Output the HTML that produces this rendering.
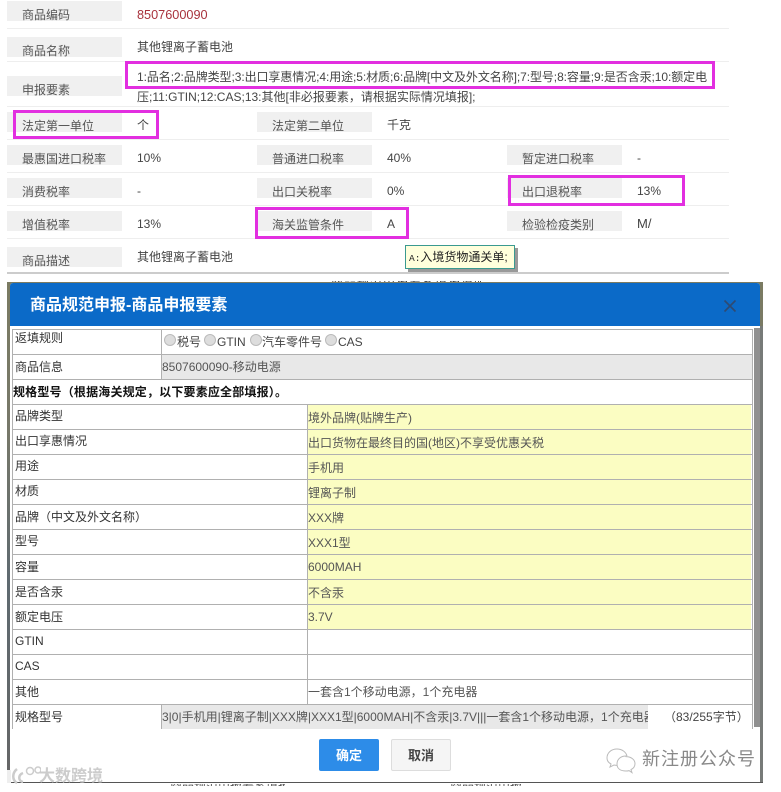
<!DOCTYPE html>
<html lang="zh"><head><meta charset="utf-8"><title>商品规范申报</title>
<style>
*{box-sizing:border-box}
html,body{margin:0;padding:0;background:#fff}
body{width:781px;height:792px;position:relative;overflow:hidden;font:12px/16px "Liberation Sans","Noto Sans CJK SC",sans-serif;color:#444}
#w{left:0;top:0;width:781px;height:792px;overflow:hidden;filter:blur(.35px)}
div{position:absolute}
.l{width:115px;height:20px;background:#f0f0f0;padding:5px 0 0 15px;line-height:18px;white-space:nowrap;overflow:visible;color:#555}
.v{white-space:nowrap;color:#444;line-height:16px}
.h{left:7px;width:722px;height:1px;background:#eee}
.m{border:3px solid #e22fe0}
.t{white-space:nowrap;color:#333;line-height:16px}
.y{white-space:nowrap;color:#555;line-height:16px}
.hl{left:12px;width:740px;height:1px;background:#b0b0b0}
.vl{width:1px;background:#b0b0b0}
.r{position:absolute;width:12px;height:12px;border-radius:50%;background:#ddd;border:1px solid #bbb;top:334px}
</style></head><body><div id="w">

<div class="l" style="left:7px;top:1px">商品编码</div><div class="v" style="left:137px;top:7px;color:#a8323c;font-size:12.7px">8507600090</div>
<div class="h" style="top:28px"></div>
<div class="l" style="left:7px;top:37px">商品名称</div><div class="v" style="left:137px;top:39px">其他锂离子蓄电池</div>
<div class="h" style="top:61px"></div>
<div class="l" style="left:7px;top:76px">申报要素</div>
<div class="v" style="left:137px;top:69px;letter-spacing:-.08px">1:品名;2:品牌类型;3:出口享惠情况;4:用途;5:材质;6:品牌[中文及外文名称];7:型号;8:容量;9:是否含汞;10:额定电</div>
<div class="v" style="left:137px;top:89px">压;11:GTIN;12:CAS;13:其他[非必报要素，请根据实际情况填报];</div>
<div class="h" style="top:106px"></div>

<div class="l" style="left:7px;top:112px">法定第一单位</div><div class="v" style="left:137px;top:117px">个</div>
<div class="l" style="left:257px;top:112px">法定第二单位</div><div class="v" style="left:387px;top:117px">千克</div>
<div class="h" style="top:139px"></div>

<div class="l" style="left:7px;top:145px">最惠国进口税率</div><div class="v" style="left:137px;top:150px">10%</div>
<div class="l" style="left:257px;top:145px">普通进口税率</div><div class="v" style="left:387px;top:150px">40%</div>
<div class="l" style="left:507px;top:145px">暂定进口税率</div><div class="v" style="left:637px;top:150px">-</div>
<div class="h" style="top:172px"></div>

<div class="l" style="left:7px;top:178px">消费税率</div><div class="v" style="left:137px;top:183px">-</div>
<div class="l" style="left:257px;top:178px">出口关税率</div><div class="v" style="left:387px;top:183px">0%</div>
<div class="l" style="left:507px;top:178px">出口退税率</div><div class="v" style="left:637px;top:183px">13%</div>
<div class="h" style="top:205px"></div>

<div class="l" style="left:7px;top:211px">增值税率</div><div class="v" style="left:137px;top:216px">13%</div>
<div class="l" style="left:257px;top:211px">海关监管条件</div><div class="v" style="left:387px;top:216px">A</div>
<div class="l" style="left:507px;top:211px">检验检疫类别</div><div class="v" style="left:637px;top:216px;font-size:13px">M/</div>
<div class="h" style="top:238px"></div>

<div class="l" style="left:7px;top:247px">商品描述</div><div class="v" style="left:137px;top:249px">其他锂离子蓄电池</div>
<div class="h" style="top:272px;height:2px;background:#ccc"></div>

<div class="m" style="left:125px;top:61px;width:590px;height:28px"></div>
<div class="m" style="left:13px;top:110px;width:146px;height:29px"></div>
<div class="m" style="left:255px;top:207px;width:154px;height:32px"></div>
<div class="m" style="left:508px;top:175px;width:177px;height:31px"></div>

<div style="left:408px;top:248px;width:110px;height:24px;background:#999"></div>
<div style="left:405px;top:245px;width:110px;height:24px;background:#ffffdc;border:1px solid #3a9a90;color:#222;padding:3px 0 0 3px;white-space:nowrap;line-height:16px;font-size:12px"><span style="font-family:'Liberation Mono',monospace;font-size:9.5px">A:</span>入境货物通关单;</div>

<!-- page text peeking behind the dialog -->
<div style="left:331px;top:281px;width:150px;height:2px;overflow:hidden;color:#333;white-space:nowrap;line-height:3px;letter-spacing:1px">商品规范申报要素填报说明</div>
<div style="left:170px;top:784px;width:115px;height:2px;overflow:hidden;color:#555;white-space:nowrap;line-height:2px">商品规范申报要素填报说明</div>
<div style="left:450px;top:784px;width:72px;height:2px;overflow:hidden;color:#555;white-space:nowrap;line-height:2px">商品规范申报</div>

<!-- overlay strips behind modal -->
<div style="left:7px;top:282px;width:756px;height:501px;background:linear-gradient(#7b7b62,#77786a 30%,#5f6a70 60%,#666 100%)"></div>
<div style="left:760px;top:326px;width:3px;height:457px;background:#777a78"></div>
<div style="left:7px;top:782px;width:756px;height:1px;background:#555"></div>

<!-- modal -->
<div style="left:10px;top:283px;width:750px;height:499px;background:#fff;border-radius:3px 3px 0 0"></div>
<div style="left:754px;top:328px;width:6px;height:399px;background:#909090"></div>
<div style="left:10px;top:283px;width:750px;height:43px;background:#0b6ac8;border-radius:3px 3px 0 0"></div>
<div style="left:30px;top:295px;color:#fff;font-size:16px;font-weight:bold;line-height:22px;white-space:nowrap">商品规范申报-商品申报要素</div>
<svg style="position:absolute;left:722px;top:298px" width="16" height="16" viewBox="0 0 16 16"><path d="M2.5 2.5L13.5 13.5M13.5 2.5L2.5 13.5" stroke="#2f4a72" stroke-width="1.6" fill="none"/></svg>

<!-- table fills -->
<div style="left:12px;top:329px;width:741px;height:400px;background:#fff"></div>
<div style="left:162px;top:355px;width:590px;height:24px;background:#e8e8e8"></div>
<div style="left:308px;top:405px;width:443px;height:224px;background:#fbfdc2"></div>
<div style="left:162px;top:705px;width:486px;height:24px;background:#e8e8e8"></div>

<!-- table lines -->
<div class="hl" style="top:329px"></div><div class="hl" style="top:354px"></div><div class="hl" style="top:379px"></div>
<div class="hl" style="top:404px"></div><div class="hl" style="top:429px"></div><div class="hl" style="top:454px"></div>
<div class="hl" style="top:479px"></div><div class="hl" style="top:504px"></div><div class="hl" style="top:529px"></div>
<div class="hl" style="top:554px"></div><div class="hl" style="top:579px"></div><div class="hl" style="top:604px"></div>
<div class="hl" style="top:629px"></div><div class="hl" style="top:654px"></div><div class="hl" style="top:679px"></div>
<div class="hl" style="top:704px"></div>
<div class="vl" style="left:12px;top:329px;height:400px"></div>
<div class="vl" style="left:752px;top:329px;height:400px"></div>
<div class="vl" style="left:161px;top:329px;height:50px"></div>
<div class="vl" style="left:161px;top:704px;height:25px"></div>
<div class="vl" style="left:307px;top:404px;height:300px"></div>

<!-- table text -->
<div class="t" style="left:15px;top:330px">返填规则</div>
<span class="r" style="left:164px"></span><div class="t" style="left:177px;top:334px;color:#444">税号</div>
<span class="r" style="left:204px"></span><div class="t" style="left:217px;top:334px;color:#444">GTIN</div>
<div class="r" style="left:250px"></div><div class="t" style="left:262px;top:334px;color:#444">汽车零件号</div>
<div class="r" style="left:325px"></div><div class="t" style="left:338px;top:334px;color:#444">CAS</div>
<div class="t" style="left:15px;top:359px">商品信息</div>
<div class="y" style="left:162px;top:359px">8507600090-移动电源</div>
<div class="t" style="left:13px;top:384px;color:#111;font-weight:bold;letter-spacing:.18px">规格型号（根据海关规定，以下要素应全部填报）。</div>

<div class="t" style="left:15px;top:408px">品牌类型</div><div class="y" style="left:308px;top:410px">境外品牌(贴牌生产)</div>
<div class="t" style="left:15px;top:433px">出口享惠情况</div><div class="y" style="left:308px;top:435px">出口货物在最终目的国(地区)不享受优惠关税</div>
<div class="t" style="left:15px;top:458px">用途</div><div class="y" style="left:308px;top:460px">手机用</div>
<div class="t" style="left:15px;top:483px">材质</div><div class="y" style="left:308px;top:485px">锂离子制</div>
<div class="t" style="left:15px;top:509px">品牌（中文及外文名称）</div><div class="y" style="left:308px;top:510px">XXX牌</div>
<div class="t" style="left:15px;top:533px">型号</div><div class="y" style="left:308px;top:535px">XXX1型</div>
<div class="t" style="left:15px;top:559px">容量</div><div class="y" style="left:308px;top:559px">6000MAH</div>
<div class="t" style="left:15px;top:584px">是否含汞</div><div class="y" style="left:308px;top:585px">不含汞</div>
<div class="t" style="left:15px;top:609px">额定电压</div><div class="y" style="left:308px;top:609px">3.7V</div>
<div class="t" style="left:15px;top:633px">GTIN</div>
<div class="t" style="left:15px;top:658px">CAS</div>
<div class="t" style="left:15px;top:684px">其他</div><div class="y" style="left:308px;top:684px">一套含1个移动电源，1个充电器</div>
<div class="t" style="left:15px;top:709px">规格型号</div>
<div class="y" style="left:162px;top:709px;width:486px;overflow:hidden">3|0|手机用|锂离子制|XXX牌|XXX1型|6000MAH|不含汞|3.7V|||一套含1个移动电源，1个充电器</div>
<div class="y" style="left:664px;top:709px;color:#444">（83/255字节）</div>

<!-- buttons -->
<div style="left:319px;top:739px;width:60px;height:32px;background:#2d8ce8;border-radius:2px;color:#fff;font-weight:bold;font-size:13px;text-align:center;line-height:33px">确定</div>
<div style="left:391px;top:739px;width:60px;height:32px;background:#f5f5f5;border:1px solid #ddd;border-radius:2px;color:#444;font-weight:bold;font-size:13px;text-align:center;line-height:31px">取消</div>

<!-- watermarks -->
<div style="left:7px;top:770px;width:4px;height:13px;background:#eee"></div>
<svg style="position:absolute;left:9px;top:765px" width="32" height="22" viewBox="0 0 32 22"><path d="M8 4C3 8 3 15 8 18M14 8C9 10 9 16 14 17" stroke="#ccc" stroke-width="2.5" fill="none"/><circle cx="21" cy="6" r="3.5" fill="none" stroke="#ccc" stroke-width="1.5"/><circle cx="29" cy="5" r="3" fill="none" stroke="#ccc" stroke-width="1.5"/></svg>
<div style="left:39px;top:767px;color:#ccc;font-size:16px;font-weight:bold;line-height:20px;white-space:nowrap">大数跨境</div>
<svg style="position:absolute;left:604px;top:746px" width="34" height="28" viewBox="0 0 34 28"><path d="M13 3C7 3 3 7 3 12c0 3 2 5 4 6l-1 3 4-2c1 0 2 .4 3 .4M13 3c5 0 9 3 10 7" stroke="#bbb" fill="none"/><path d="M22 10c-5 0-9 3-9 8s4 7 9 7c1 0 2 0 3-.4l3 2-1-3c2-1 4-3 4-6 0-4-4-7-9-7z" stroke="#bbb" fill="none"/></svg>
<div style="left:642px;top:747px;color:#888;font-size:18px;line-height:24px;white-space:nowrap;letter-spacing:1px">新注册公众号</div>
</div></body></html>
